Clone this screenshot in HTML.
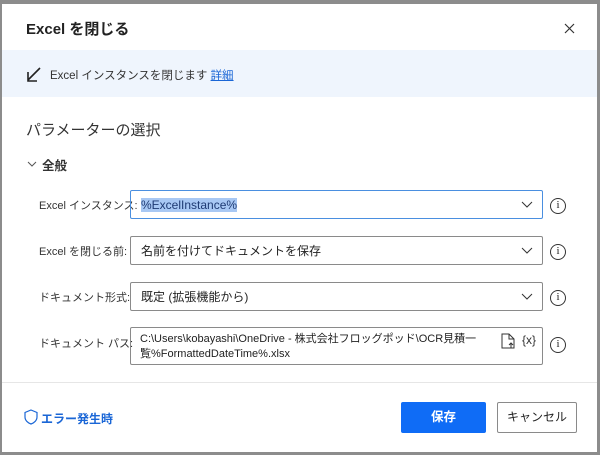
<!DOCTYPE html>
<html><head><meta charset="utf-8"><style>
*{margin:0;padding:0;box-sizing:border-box}
body{width:600px;height:455px;background:#8c8c8c;font-family:"Liberation Sans","Noto Sans CJK JP",sans-serif;position:relative;overflow:hidden;color:#222}
.dlg{position:absolute;left:2px;top:4px;width:595px;height:448px;background:#fff}
.abs{position:absolute}
.lbl{position:absolute;left:37px;font-size:11px;color:#333;line-height:16px;white-space:nowrap}
.box{position:absolute;left:128px;width:413px;height:29px;border:1px solid #8a8a8a;border-radius:2px;font-size:12px;padding-left:10px;display:flex;align-items:center;color:#222;white-space:nowrap}
.chev{position:absolute;right:9px;top:10px}
.info{position:absolute;left:548px;width:16px;height:16px;border:1.3px solid #333;border-radius:50%;font-size:11px;text-align:center;line-height:13px;font-family:"Liberation Serif",serif}
</style></head><body>
<div class="dlg">
 <div class="abs" style="left:24px;top:14px;font-size:15px;font-weight:bold;color:#222">Excel を閉じる</div>
 <svg class="abs" style="left:562px;top:19px" width="11" height="11"><path d="M1 1L10 10M10 1L1 10" stroke="#333" stroke-width="1.2"/></svg>
 <div class="abs" style="left:0;top:46px;width:595px;height:47px;background:#eff5fd"></div>
 <svg class="abs" style="left:24px;top:63px" width="16" height="16"><path d="M14 1L2 13M2 5V14H11" stroke="#222" stroke-width="1.6" fill="none"/></svg>
 <div class="abs" style="left:48px;top:63px;font-size:11.5px;color:#333">Excel インスタンスを閉じます <span style="color:#1a66d6;text-decoration:underline">詳細</span></div>
 <div class="abs" style="left:24px;top:115px;font-size:15px;color:#333">パラメーターの選択</div>
 <svg class="abs" style="left:25px;top:156px" width="10" height="8"><path d="M1 2L5 6L9 2" stroke="#555" fill="none"/></svg>
 <div class="abs" style="left:40px;top:151px;font-size:12.5px;font-weight:bold;color:#333">全般</div>

 <div class="lbl" style="top:194px">Excel インスタンス:</div>
 <div class="box" style="top:186px;border-color:#4a8fe0"><span style="background:#a8c8f4;color:#1e3a73">%ExcelInstance%</span>
  <svg class="chev" width="12" height="8"><path d="M1 1L6 6L11 1" stroke="#333" fill="none"/></svg></div>
 <div class="info" style="top:194px">i</div>

 <div class="lbl" style="top:240px">Excel を閉じる前:</div>
 <div class="box" style="top:232px">名前を付けてドキュメントを保存
  <svg class="chev" width="12" height="8"><path d="M1 1L6 6L11 1" stroke="#333" fill="none"/></svg></div>
 <div class="info" style="top:240px">i</div>

 <div class="lbl" style="top:286px">ドキュメント形式:</div>
 <div class="box" style="top:278px">既定 (拡張機能から)
  <svg class="chev" width="12" height="8"><path d="M1 1L6 6L11 1" stroke="#333" fill="none"/></svg></div>
 <div class="info" style="top:286px">i</div>

 <div class="lbl" style="top:332px">ドキュメント パス:</div>
 <div class="box" style="top:323px;height:38px;display:block;line-height:15px;padding-top:4px;padding-left:9px;font-size:11px">C:\Users\kobayashi\OneDrive - 株式会社フロッグポッド\OCR見積一<br>覧%FormattedDateTime%.xlsx
  <svg class="abs" style="left:370px;top:5px" width="14" height="16"><path d="M1 1H8L13 6V15H1Z M8 1V6H13" stroke="#333" fill="none"/><path d="M10 15V10M8 12L10 10L12 12" stroke="#333" fill="none"/></svg>
  <span class="abs" style="left:391px;top:5px;font-size:12px;color:#333">{x}</span></div>
 <div class="info" style="top:333px">i</div>

 <div class="abs" style="left:0;top:378px;width:595px;height:1px;background:#e6e6e6"></div>
 <svg class="abs" style="left:22px;top:405px" width="14" height="16"><path d="M7 1L13 3.5V8C13 11.5 10 14 7 15C4 14 1 11.5 1 8V3.5Z" stroke="#1a66d6" stroke-width="1.2" fill="none"/></svg>
 <div class="abs" style="left:39px;top:406px;font-size:12px;font-weight:bold;color:#1a66d6">エラー発生時</div>
 <div class="abs" style="left:399px;top:398px;width:85px;height:31px;background:#0f6cf6;border-radius:2px;color:#fff;font-size:12.5px;text-align:center;line-height:31px;font-weight:bold">保存</div>
 <div class="abs" style="left:495px;top:398px;width:80px;height:31px;border:1px solid #8a8a8a;border-radius:2px;font-size:12px;text-align:center;line-height:29px;color:#222">キャンセル</div>
</div>
</body></html>
